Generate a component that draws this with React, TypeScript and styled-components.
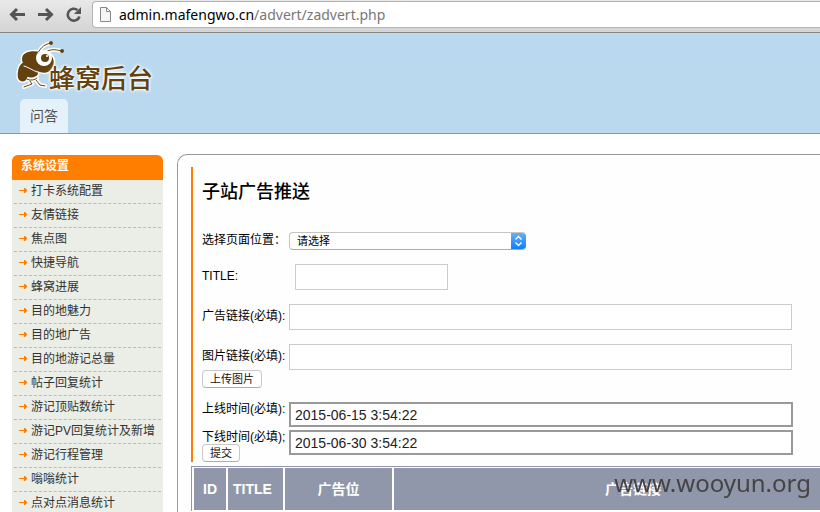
import React from 'react';
import styled, { createGlobalStyle } from 'styled-components';

const GlobalStyle = createGlobalStyle`
  * { box-sizing: border-box; }
  body {
    margin: 0;
    background: #fff;
    color: #000;
    font: 12px/16px "Liberation Sans", "Noto Sans CJK SC", sans-serif;
  }
`;

const Page = styled.div`
  display: flex;
  flex-direction: column;
  height: 100vh;
  overflow: hidden;
`;

const BrowserBar = styled.div`
  display: flex;
  flex: none;
  align-items: flex-start;
  height: 33px;
  padding-left: 8px;
  background: linear-gradient(#e9e9e9, #d4d4d4);
  border-bottom: 1px solid #858585;
`;

const ToolButton = styled.button`
  display: flex;
  width: 28px;
  height: 28px;
  padding: 5px 0 0;
  border: 0;
  background: none;
`;

const AddressBar = styled.div`
  display: flex;
  flex: 1;
  align-items: center;
  gap: 8px;
  height: 27px;
  margin-top: 1px;
  padding-left: 7px;
  background: #fff;
  border: 1px solid #b4b4b4;
  border-right: 0;
  border-radius: 4px 0 0 4px;
`;

const Address = styled.div`
  color: #777;
  font: 14px/20px "Noto Sans", sans-serif;
`;

const Host = styled.span`
  color: #000;
`;

const Header = styled.header`
  display: flex;
  flex: none;
  flex-direction: column;
  justify-content: space-between;
  align-items: flex-start;
  height: 101px;
  padding: 5px 14px 0;
  background: #bad9ee;
  border-bottom: 1px solid #f57f0c;
`;

const Logo = styled.a`
  display: flex;
  align-items: flex-end;
  color: #63420f;
  text-decoration: none;
`;

const Bee = styled.svg`
  flex: none;
  margin-right: -19px;
`;

const LogoText = styled.span`
  font: 500 26px/30px "Noto Sans CJK SC", sans-serif;
  text-shadow: 0 0 2px #fff, 0 0 2px #fff, 0 0 3px #fff, 0 0 4px #fff;
`;

const Tab = styled.a`
  margin-left: 6px;
  padding: 0 10px;
  border-radius: 5px 5px 0 0;
  background: #e6f2f9;
  color: #555;
  font-size: 14px;
  line-height: 34px;
  text-decoration: none;
`;

const Columns = styled.div`
  display: flex;
  flex: 1;
  gap: 14px;
  min-height: 0;
  padding: 20px 0 0 12px;
`;

const Sidebar = styled.nav`
  flex: none;
  width: 151px;
  margin-top: 1px;
  background: #ebeee7;
  border-radius: 6px 6px 0 0;
`;

const SidebarTitle = styled.h2`
  margin: 0;
  padding: 0 9px 2px;
  background: #ff7e00;
  border-radius: 6px 6px 0 0;
  color: #fff;
  font-size: 12px;
  line-height: 23px;
`;

const Menu = styled.ul`
  margin: 0;
  padding: 0 2px;
  list-style: none;
`;

const MenuLink = styled.a`
  display: flex;
  align-items: center;
  gap: 4px;
  height: 24px;
  padding: 0 0 1px 5px;
  border-bottom: 1px dashed #b9bdae;
  color: #333;
  text-decoration: none;
  white-space: nowrap;
`;

const Panel = styled.main`
  flex: 1;
  min-width: 0;
  padding: 12px 0 0 13px;
  overflow: hidden;
  background: #fefefe;
  border: 1px solid #999;
  border-width: 1px 0 0 1px;
  border-radius: 10px 0 0 0;
`;

const Form = styled.form`
  display: flex;
  flex-direction: column;
  margin-bottom: 4px;
  padding: 13px 27px 0 9px;
  border-left: 2px solid #ff7e00;
`;

const Title = styled.h1`
  margin: 0 0 28px;
  font-size: 18px;
  font-weight: 500;
  line-height: 24px;
`;

const Field = styled.div<{ $gap: number }>`
  display: flex;
  align-items: flex-start;
  margin-bottom: ${(p) => p.$gap}px;
`;

const LabelColumn = styled.div<{ $top?: number; $wide?: boolean }>`
  display: flex;
  flex: none;
  flex-direction: column;
  align-items: flex-start;
  width: ${(p) => (p.$wide ? 93 : 87)}px;
  padding-top: ${(p) => p.$top ?? 0}px;
  white-space: nowrap;
`;

const TimeLabel = styled.label`
  line-height: 14px;
`;

const TextInput = styled.input<{ $width: number }>`
  flex: 1;
  min-width: 0;
  max-width: ${(p) => p.$width}px;
  height: 26px;
  border: 1px solid #ccc;
  background: #fff;
`;

const TimeInput = styled.input`
  flex: 1;
  min-width: 0;
  max-width: 504px;
  height: 25px;
  padding: 0 4px;
  border: 2px solid #999;
  background: #fff;
  color: #222;
  font: 14px "Liberation Sans", sans-serif;
`;

const SelectBox = styled.div`
  display: flex;
  width: 237px;
  height: 18px;
  overflow: hidden;
  border: 1px solid #c4c4c4;
  border-right: 0;
  border-bottom-color: #acacac;
  border-radius: 4px;
  background: #fff;
`;

const Select = styled.select`
  flex: 1;
  padding: 0 7px;
  border: 0;
  background: transparent;
  appearance: none;
  color: #000;
  font: 11px/16px "Liberation Sans", "Noto Sans CJK SC", sans-serif;
`;

const Stepper = styled.span`
  display: flex;
  flex: none;
  align-items: center;
  justify-content: center;
  width: 15px;
  height: 18px;
  margin: -1px 0;
  background: linear-gradient(#6bb3fa, #0a7bff);
  pointer-events: none;
`;

const PushButton = styled.button`
  height: 18px;
  padding: 0 7px;
  border: 1px solid #c8c8c8;
  border-bottom-color: #adadad;
  border-radius: 4px;
  background: #fff;
  color: #111;
  font: 11px/16px "Liberation Sans", "Noto Sans CJK SC", sans-serif;
`;

const UploadButton = styled(PushButton)`
  margin-top: 6px;
`;

const Table = styled.table`
  width: 684px;
  table-layout: fixed;
  border: 1px solid #9197aa;
  border-bottom: 0;
  border-spacing: 2px 1px;
`;

const HeadCell = styled.th<{ $width?: number; $align?: 'left' }>`
  width: ${(p) => (p.$width ? `${p.$width}px` : 'auto')};
  height: 42px;
  padding: 0 5px;
  background: #9197aa;
  color: #fff;
  font-size: 14px;
  font-weight: bold;
  text-align: ${(p) => p.$align ?? 'center'};
`;

const Watermark = styled.div`
  position: fixed;
  right: 9px;
  bottom: 11px;
  color: #444;
  font: 24px/36px "Noto Sans", sans-serif;
`;

const menuItems = [
  '打卡系统配置',
  '友情链接',
  '焦点图',
  '快捷导航',
  '蜂窝进展',
  '目的地魅力',
  '目的地广告',
  '目的地游记总量',
  '帖子回复统计',
  '游记顶贴数统计',
  '游记PV回复统计及新增',
  '游记行程管理',
  '嗡嗡统计',
  '点对点消息统计',
];

const columns: { label: string; width?: number; align?: 'left' }[] = [
  { label: 'ID', width: 32 },
  { label: 'TITLE', width: 55, align: 'left' },
  { label: '广告位', width: 107 },
  { label: '广告链接' },
];

const MenuArrow = () => (
  <svg width="8" height="6" viewBox="0 0 8 6" aria-hidden="true">
    <path d="M0 2h5V0h1l2 2v1l-2 2H5V3H0z" fill="#ff7e00" />
  </svg>
);

const BeeShape = () => (
  <>
    <path d="M11 24C5 25 3 33 4 40C5 44 12 45 13 40C16 34 14 28 11 24Z" />
    <path d="M8 21C8 14 17 12 27 14C37 13 43 22 38 30C34 37 27 35 21 32C14 31 8 27 8 21Z" />
    <path d="M12 28C16 27 22 31 24 35C24 40 13 41 11 37Z" />
  </>
);

const BeeLines = () => (
  <>
    <path d="M24 15C27 9 31 6 37 5M30 15C35 11 41 11 47 13" />
    <path d="M13 41C16 43 21 42 23 40M16 43L18 46L10 49M22 42L26 47L31 48" />
  </>
);

const BeeIcon = () => (
  <Bee width="54" height="54" viewBox="0 0 54 54" fill="none" strokeLinecap="round" strokeLinejoin="round" aria-hidden="true">
    <g stroke="#fff" strokeWidth="3" fill="#fff"><BeeShape /></g>
    <g stroke="#fff" strokeWidth="4"><BeeLines /></g>
    <g fill="#63420f"><BeeShape /></g>
    <path d="M10 28C14 29 18 32 23 34" stroke="#fff" strokeWidth="1" />
    <g stroke="#63420f" strokeWidth="1"><BeeLines /></g>
    <g fill="#63420f">
      <circle cx="37" cy="5" r="2" />
      <circle cx="48" cy="13" r="2" />
    </g>
    <circle cx="30" cy="20" r="8" fill="#fff" />
    <circle cx="31" cy="20" r="4" fill="#63420f" />
    <circle cx="33" cy="18" r="1" fill="#fff" />
  </Bee>
);

export default function App() {
  return (
    <Page>
      <GlobalStyle />
      <BrowserBar>
        <ToolButton aria-label="Back">
          <svg width="18" height="20" viewBox="0 0 18 20" fill="none" stroke="#555" strokeWidth="3">
            <path d="M17 9.500H4M9 4L3.500 9.500L9 15" />
          </svg>
        </ToolButton>
        <ToolButton aria-label="Forward">
          <svg width="18" height="20" viewBox="0 0 18 20" fill="none" stroke="#555" strokeWidth="3">
            <path d="M2 9.500H15M10 4L15.500 9.500L10 15" />
          </svg>
        </ToolButton>
        <ToolButton aria-label="Reload">
          <svg width="19" height="20" viewBox="0 0 19 20" fill="none" stroke="#555" strokeWidth="2.600">
            <path d="M15.500 11.500A6 6 0 1 1 13.500 5" />
            <path d="M17 2V9H10Z" fill="#555" stroke="none" />
          </svg>
        </ToolButton>
        <AddressBar>
          <svg width="11" height="15" viewBox="0 0 11 15" fill="#f6f6f6" stroke="#888" aria-hidden="true">
            <path d="M.5.5H6.500L10.500 4.500V14.500H.5ZM6.500.5V4.500H10.500" />
          </svg>
          <Address><Host>admin.mafengwo.cn</Host>/advert/zadvert.php</Address>
        </AddressBar>
      </BrowserBar>

      <Header>
        <Logo href="#">
          <BeeIcon />
          <LogoText>蜂窝后台</LogoText>
        </Logo>
        <Tab href="#">问答</Tab>
      </Header>

      <Columns>
        <Sidebar>
          <SidebarTitle>系统设置</SidebarTitle>
          <Menu>
            {menuItems.map((item) => (
              <li key={item}>
                <MenuLink href="#"><MenuArrow />{item}</MenuLink>
              </li>
            ))}
          </Menu>
        </Sidebar>

        <Panel>
          <Form onSubmit={(e) => e.preventDefault()}>
            <Title>子站广告推送</Title>
            <Field $gap={14}>
              <LabelColumn><label htmlFor="position">选择页面位置：</label></LabelColumn>
              <SelectBox>
                <Select id="position"><option>请选择</option></Select>
                <Stepper>
                  <svg width="9" height="12" viewBox="0 0 9 12" fill="none" stroke="#fff" strokeWidth="1.400" aria-hidden="true">
                    <path d="M1.500 4.500l3-3 3 3M1.500 7.500l3 3 3-3" />
                  </svg>
                </Stepper>
              </SelectBox>
            </Field>
            <Field $gap={14}>
              <LabelColumn $top={4} $wide><label htmlFor="title">TITLE:</label></LabelColumn>
              <TextInput id="title" $width={153} />
            </Field>
            <Field $gap={14}>
              <LabelColumn $top={4}><label htmlFor="link">广告链接(必填):</label></LabelColumn>
              <TextInput id="link" $width={503} />
            </Field>
            <Field $gap={14}>
              <LabelColumn $top={4}>
                <label htmlFor="image">图片链接(必填):</label>
                <UploadButton type="button">上传图片</UploadButton>
              </LabelColumn>
              <TextInput id="image" $width={503} />
            </Field>
            <Field $gap={3}>
              <LabelColumn><TimeLabel htmlFor="start">上线时间(必填):</TimeLabel></LabelColumn>
              <TimeInput id="start" defaultValue="2015-06-15 3:54:22" />
            </Field>
            <Field $gap={0}>
              <LabelColumn>
                <TimeLabel htmlFor="end">下线时间(必填);</TimeLabel>
                <PushButton type="submit">提交</PushButton>
              </LabelColumn>
              <TimeInput id="end" defaultValue="2015-06-30 3:54:22" />
            </Field>
          </Form>
          <Table>
            <thead>
              <tr>
                {columns.map((c) => (
                  <HeadCell key={c.label} $width={c.width} $align={c.align}>{c.label}</HeadCell>
                ))}
              </tr>
            </thead>
          </Table>
        </Panel>
      </Columns>
      <Watermark>www.wooyun.org</Watermark>
    </Page>
  );
}
